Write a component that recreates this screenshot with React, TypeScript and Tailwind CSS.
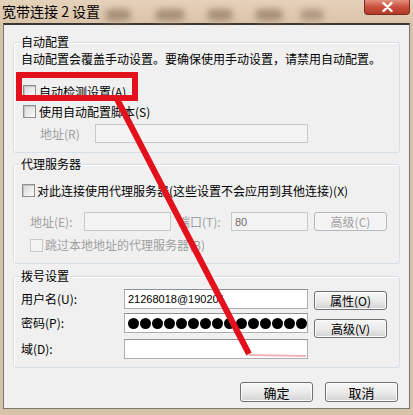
import type { ReactNode } from "react";

const FONT = "font-['Noto_Sans_CJK_SC',sans-serif]";

function Check({ disabled }: { disabled?: boolean }) {
  return (
    <span
      className={`inline-block h-[13px] w-[13px] shrink-0 border ${
        disabled
          ? "border-[#c9c9c9] bg-[#f3f3f3]"
          : "border-[#8e8f8f] bg-gradient-to-br from-[#d9d9d9] to-[#fbfbfb] shadow-[inset_1px_1px_0_#c4c4c4]"
      }`}
    />
  );
}

function Btn({
  children,
  disabled,
  className = "",
}: {
  children: ReactNode;
  disabled?: boolean;
  className?: string;
}) {
  return (
    <div
      className={`flex items-center justify-center rounded-[3px] border text-[12px] leading-none ${
        disabled
          ? "border-[#b6b9bb] bg-[#f4f4f4] text-[#a0a0a0]"
          : "border-[#707070] bg-gradient-to-b from-[#f7f7f7] via-[#ebebeb] to-[#d3d3d3] text-black shadow-[inset_0_0_0_1px_#fcfcfc]"
      } ${className}`}
    >
      {children}
    </div>
  );
}

function Field({
  className = "",
  disabled,
  children,
}: {
  className?: string;
  disabled?: boolean;
  children?: ReactNode;
}) {
  return (
    <div
      className={`flex items-center border ${
        disabled
          ? "border-[#c6c8ca] bg-[#f3f3f3]"
          : "border-[#abadb3] border-t-[#8d9198] bg-white"
      } ${className}`}
    >
      {children}
    </div>
  );
}

function Group({
  label,
  className = "",
  children,
}: {
  label: string;
  className?: string;
  children: ReactNode;
}) {
  return (
    <div
      className={`relative rounded-[3px] border border-[#d5dfe5] shadow-[inset_1px_1px_0_#ffffff] ${className}`}
    >
      <span className="absolute left-[6px] top-[-8px] bg-[#f0f0f0] px-[1px] text-[12px] leading-[14px] text-black">
        {label}
      </span>
      {children}
    </div>
  );
}

export default function App() {
  return (
    <div
      className={`relative h-[415px] w-[413px] overflow-hidden bg-[#d7c3aa] ${FONT}`}
    >
      {/* Title bar */}
      <div className="relative flex h-[23px] items-start justify-between bg-gradient-to-b from-[#e6d2ba] to-[#dac4a9]">
        <div aria-hidden="true" className="absolute left-[105px] top-[9px] h-[12px] w-[26px] rounded-full bg-[#a89079] blur-[3px]" />
        <div aria-hidden="true" className="absolute left-[155px] top-[9px] h-[12px] w-[30px] rounded-full bg-[#a89079] blur-[3px]" />
        <div aria-hidden="true" className="absolute left-[207px] top-[9px] h-[12px] w-[26px] rounded-full bg-[#a89079] blur-[3px]" />
        <div aria-hidden="true" className="absolute left-[255px] top-[9px] h-[12px] w-[28px] rounded-full bg-[#a89079] blur-[3px]" />
        <div aria-hidden="true" className="absolute left-[300px] top-[9px] h-[12px] w-[24px] rounded-full bg-[#b09a84] blur-[3px]" />
        <span className="relative pl-[2px] pt-[3px] text-[14px] leading-[17px] text-black">
          宽带连接 2 设置
        </span>
        <div className="relative mr-[3px] flex h-[15px] w-[46px] items-center justify-center rounded-b-[4px] border border-t-0 border-[#7a2a20] bg-gradient-to-b from-[#e5907f] via-[#c8503e] to-[#b23a27]">
          <svg width="11" height="10" viewBox="0 0 11 10">
            <path
              d="M1.5 1 L9.5 9 M9.5 1 L1.5 9"
              stroke="#ffffff"
              strokeWidth="2.4"
              strokeLinecap="round"
            />
          </svg>
        </div>
      </div>

      {/* Dialog body */}
      <div className="mx-[3px] h-[386px] border-x border-b border-t-2 border-x-[#7b756f] border-b-[#7b756f] border-t-[#3d3630] bg-[#f0f0f0] px-[9px] text-[12px] leading-[14px] text-black">
        {/* 自动配置 */}
        <Group label="自动配置" className="mt-[17px] h-[111px]">
          <p className="mt-[9px] h-[14px] pl-[7px] whitespace-nowrap">
            自动配置会覆盖手动设置。要确保使用手动设置，请禁用自动配置。
          </p>
          <div className="mt-[18px] flex h-[15px] items-center gap-[3px] pl-[9px]">
            <Check />
            <span>自动检测设置(A)</span>
          </div>
          <div className="mt-[5px] flex h-[15px] items-center gap-[3px] pl-[9px]">
            <Check />
            <span>使用自动配置脚本(S)</span>
          </div>
          <div className="mt-[5px] flex h-[19px] items-center pl-[26px]">
            <span className="w-[55px] text-[#a0a0a0]">地址(R)</span>
            <Field disabled className="h-[19px] w-[213px]" />
          </div>
        </Group>

        {/* 代理服务器 */}
        <Group label="代理服务器" className="mt-[11px] h-[100px]">
          <div className="mt-[18px] flex h-[15px] items-center gap-[2px] pl-[8px]">
            <Check />
            <span className="whitespace-nowrap">
              对此连接使用代理服务器(这些设置不会应用到其他连接)(X)
            </span>
          </div>
          <div className="mt-[14px] flex h-[19px] items-center pl-[16px] text-[#a0a0a0]">
            <span className="w-[54px] whitespace-nowrap">地址(E):</span>
            <Field disabled className="h-[19px] w-[87px]" />
            <span className="ml-[7px] w-[53px] whitespace-nowrap">端口(T):</span>
            <Field disabled className="h-[19px] w-[77px] pl-[3px] font-['Liberation_Sans',sans-serif] text-[11px] text-[#6d6d6d]">
              80
            </Field>
            <Btn disabled className="ml-[6px] h-[19px] w-[73px]">
              高级(C)
            </Btn>
          </div>
          <div className="mt-[7px] flex h-[14px] items-center gap-[2px] pl-[16px] text-[#a0a0a0]">
            <Check disabled />
            <span>跳过本地地址的代理服务器(B)</span>
          </div>
        </Group>

        {/* 拨号设置 */}
        <Group label="拨号设置" className="mt-[12px] flex h-[92px] pl-[7px]">
          <div className="flex flex-col">
            <div className="mt-[12px] flex h-[20px] items-center">
              <span className="w-[103px]">用户名(U):</span>
              <Field className="h-[20px] w-[184px] pl-[3px] font-['Liberation_Sans',sans-serif] text-[11px]">
                21268018@190201
              </Field>
            </div>
            <div className="mt-[4px] flex h-[20px] items-center">
              <span className="w-[103px]">密码(P):</span>
              <Field className="h-[20px] w-[184px] gap-[1px] pl-[3px]">
                {Array.from({ length: 15 }).map((_, i) => (
                  <span
                    key={i}
                    className="h-[11px] w-[11px] shrink-0 rounded-full bg-black"
                  />
                ))}
              </Field>
            </div>
            <div className="mt-[6px] flex h-[20px] items-center">
              <span className="w-[103px]">域(D):</span>
              <Field className="h-[20px] w-[184px]" />
            </div>
          </div>
          <div className="ml-[6px] flex flex-col">
            <Btn className="mt-[14px] h-[19px] w-[73px]">属性(O)</Btn>
            <Btn className="mt-[9px] h-[19px] w-[73px]">高级(V)</Btn>
          </div>
        </Group>

        {/* Footer buttons */}
        <div className="mr-[2px] mt-[14px] flex justify-end gap-[12px]">
          <Btn className="h-[20px] w-[73px] border-[#3c7fb1] text-[13px]">确定</Btn>
          <Btn className="h-[20px] w-[73px] text-[13px]">取消</Btn>
        </div>
      </div>

      {/* Red annotation: box */}
      <div className="absolute left-[16px] top-[72px] h-[29px] w-[122px] border-[6px] border-[#e3111b]" />

      {/* Red annotation: arrow line */}
      <svg
        className="absolute left-0 top-0"
        width="413"
        height="415"
        viewBox="0 0 413 415"
      >
        <line x1="249" y1="355" x2="306" y2="356" stroke="#f2b4b4" strokeWidth="2" />
        <line x1="117" y1="99" x2="249" y2="354" stroke="#e3111b" strokeWidth="6" />
      </svg>
    </div>
  );
}
